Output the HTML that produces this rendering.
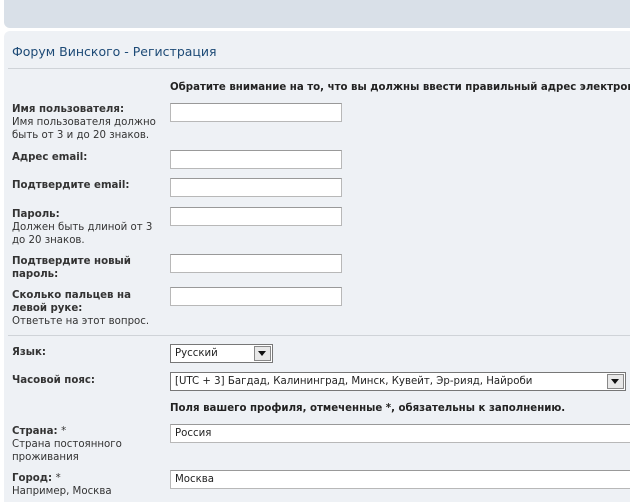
<!DOCTYPE html>
<html><head><meta charset="utf-8"><style>
html,body{margin:0;width:630px;height:502px;overflow:hidden}
body{background:#fff;font-family:"DejaVu Sans","Liberation Sans",sans-serif;font-size:10.2px;color:#333;position:relative}
.top{position:absolute;left:4px;top:0;width:626px;height:28px;background:#d9e0e8;border-radius:0 0 0 6px}
.panel{position:absolute;left:4px;top:31px;width:626px;height:471px;background:#eef1f5;border-radius:6px 0 0 0}
.a{position:absolute;white-space:nowrap;line-height:13px}
.b{font-weight:bold}
.in{position:absolute;left:170px;width:170px;height:17px;background:#fff;border:1px solid #b8b8b8;border-top-color:#999}
.hr{position:absolute;left:8px;width:622px;height:1px;background:#cfd3d8}
.sel{position:absolute;background:#fff;border:1px solid #777;height:17px;line-height:17px;padding-left:4px;color:#222;overflow:hidden}
.arr{position:absolute;right:1px;top:1px;width:15px;height:13px;border:1px solid #888;background:#e8e8e8}
.arr:after{content:"";position:absolute;left:3px;top:4px;border-left:4px solid transparent;border-right:4px solid transparent;border-top:5px solid #111}
.val{position:absolute;left:4px;top:3px;color:#222}
.clip{position:absolute;left:0;top:0;width:630px;height:502px;overflow:hidden}
</style></head><body><div class="clip">
<div class="top"></div>
<div class="panel"></div>
<div class="a" style="left:12px;top:44px;font-size:12.5px;line-height:16px;color:#1d4a76">Форум Винского - Регистрация</div>
<div class="hr" style="top:68px"></div>
<div class="a b" style="left:170px;top:81px;color:#222">Обратите внимание на то, что вы должны ввести правильный адрес электрон</div>

<div class="a" style="left:12px;top:103px"><span class="b">Имя пользователя:</span><br>Имя пользователя должно<br>быть от 3 и до 20 знаков.</div>
<div class="in" style="top:103px"></div>
<div class="a b" style="left:12px;top:151px">Адрес email:</div>
<div class="in" style="top:150px"></div>
<div class="a b" style="left:12px;top:179px">Подтвердите email:</div>
<div class="in" style="top:178px"></div>
<div class="a" style="left:12px;top:208px"><span class="b">Пароль:</span><br>Должен быть длиной от 3<br>до 20 знаков.</div>
<div class="in" style="top:207px"></div>
<div class="a b" style="left:12px;top:255px">Подтвердите новый<br>пароль:</div>
<div class="in" style="top:254px"></div>
<div class="a" style="left:12px;top:289px"><span class="b">Сколько пальцев на<br>левой руке:</span><br>Ответьте на этот вопрос.</div>
<div class="in" style="top:287px"></div>
<div class="hr" style="top:335px"></div>

<div class="a b" style="left:12px;top:346px">Язык:</div>
<div class="sel" style="left:170px;top:344px;width:97px">Русский<div class="arr"></div></div>
<div class="a b" style="left:12px;top:374px">Часовой пояс:</div>
<div class="sel" style="left:170px;top:372px;width:450px">[UTC + 3] Багдад, Калининград, Минск, Кувейт, Эр-рияд, Найроби<div class="arr"></div></div>
<div class="a b" style="left:170px;top:402px;color:#222">Поля вашего профиля, отмеченные *, обязательны к заполнению.</div>

<div class="a" style="left:12px;top:425px"><span class="b">Страна: </span>*<br>Страна постоянного<br>проживания</div>
<div class="in" style="top:424px;width:470px"><span class="val">Россия</span></div>
<div class="a" style="left:12px;top:472px"><span class="b">Город: </span>*<br>Например, Москва</div>
<div class="in" style="top:470px;width:470px"><span class="val">Москва</span></div>
</div></body></html>
